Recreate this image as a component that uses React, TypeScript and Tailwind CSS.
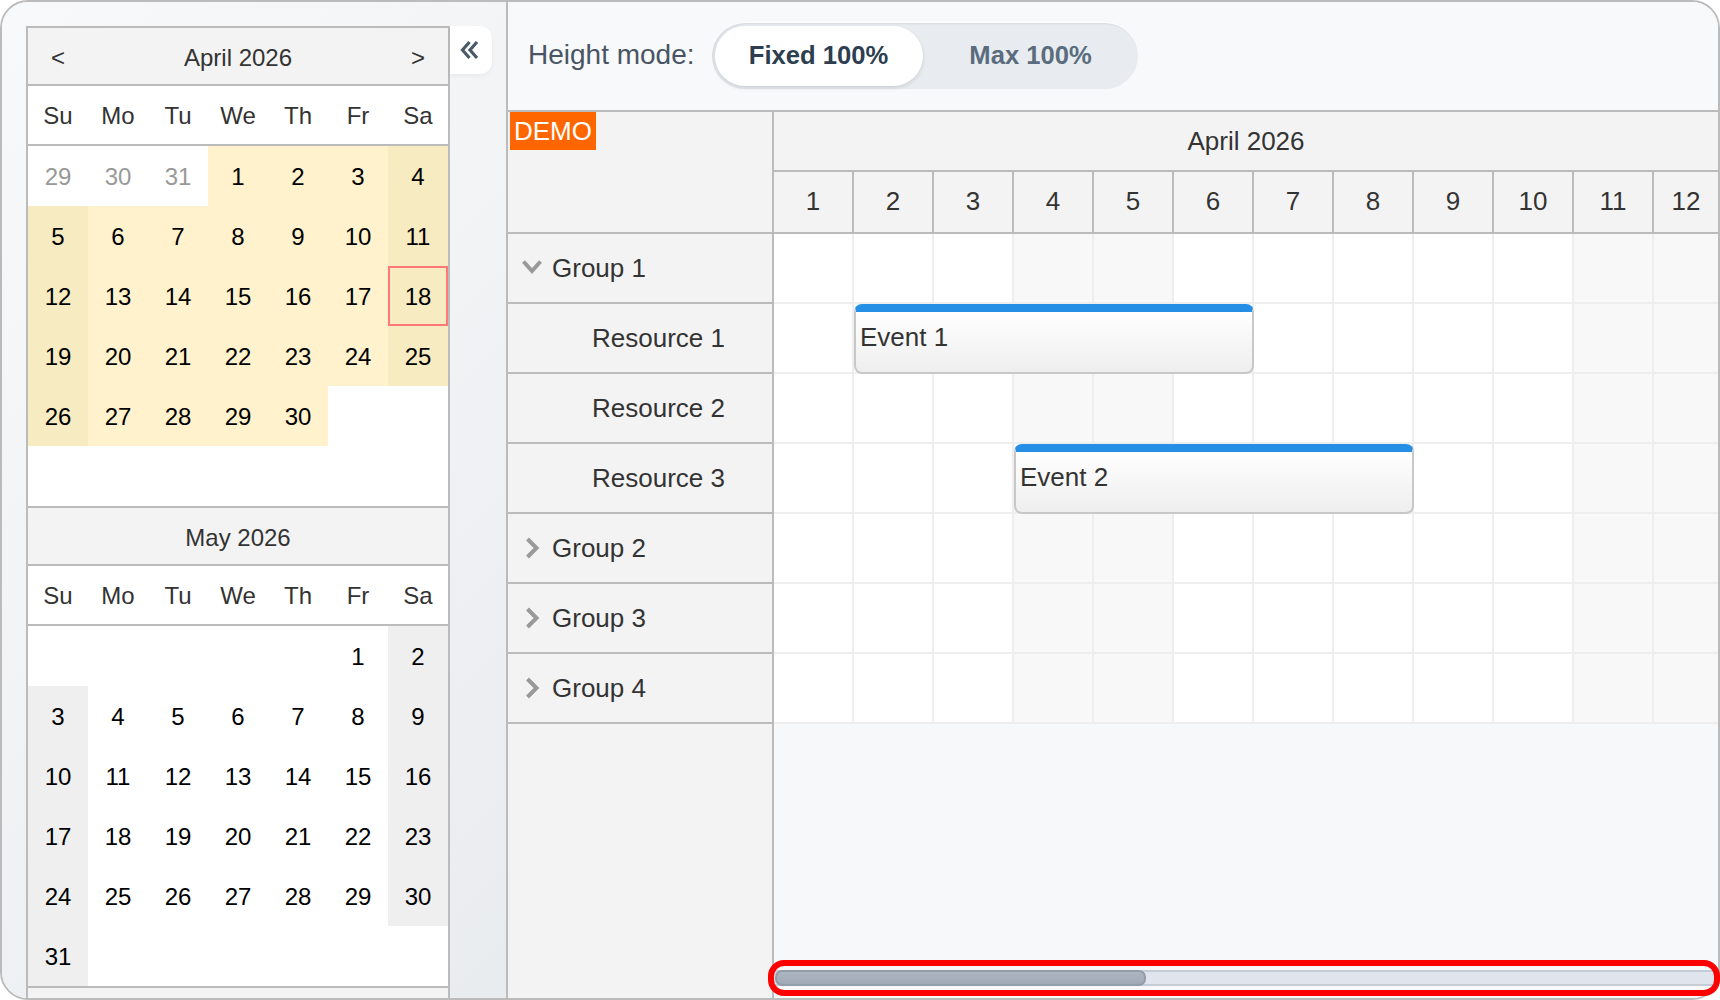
const WEEKDAYS = ['Su', 'Mo', 'Tu', 'We', 'Th', 'Fr', 'Sa'];
const DAYS = [1, 2, 3, 4, 5, 6, 7, 8, 9, 10, 11, 12];
const WEEKEND_DAYS = [4, 5, 11, 12];

const APRIL_CELLS = [
  '29', '30', '31', '1', '2', '3', '4',
  '5', '6', '7', '8', '9', '10', '11',
  '12', '13', '14', '15', '16', '17', '18',
  '19', '20', '21', '22', '23', '24', '25',
  '26', '27', '28', '29', '30', '', '',
  '', '', '', '', '', '', '',
];

const MAY_CELLS = [
  '', '', '', '', '', '1', '2',
  '3', '4', '5', '6', '7', '8', '9',
  '10', '11', '12', '13', '14', '15', '16',
  '17', '18', '19', '20', '21', '22', '23',
  '24', '25', '26', '27', '28', '29', '30',
  '31', '', '', '', '', '', '',
];

const ROWS = [
  { label: 'Group 1', group: true, open: true },
  { label: 'Resource 1', group: false, open: false },
  { label: 'Resource 2', group: false, open: false },
  { label: 'Resource 3', group: false, open: false },
  { label: 'Group 2', group: true, open: false },
  { label: 'Group 3', group: true, open: false },
  { label: 'Group 4', group: true, open: false },
];

function CalendarMonth({ title, cells, month }: { title: string; cells: string[]; month: 'april' | 'may' }) {
  return (
    <div>
      <div className="flex h-[58px] items-center justify-between border-b-2 border-[#bbb] bg-[#f3f3f3] pt-[4px] text-[24px] text-[#333]">
        <span className="flex w-[60px] justify-center">{month === 'april' ? '<' : ''}</span>
        <span>{title}</span>
        <span className="flex w-[60px] justify-center">{month === 'april' ? '>' : ''}</span>
      </div>
      <div className="grid h-[60px] grid-cols-7 items-center border-b-2 border-[#bbb] bg-white pt-[2px] text-center text-[24px] text-[#333]">
        {WEEKDAYS.map((d) => (
          <span key={d}>{d}</span>
        ))}
      </div>
      <div className="grid grid-cols-7 bg-white text-[24px]">
        {cells.map((text, i) => {
          const weekend = i % 7 === 0 || i % 7 === 6;
          const offMonth = month === 'april' && i < 3;
          const isToday = month === 'april' && text === '18';
          let bg = 'bg-white';
          if (text && !offMonth) {
            if (month === 'april') bg = weekend ? 'bg-[#f6ebc1]' : 'bg-[#fff2cc]';
            else if (weekend) bg = 'bg-[#efefef]';
          }
          return (
            <div
              key={i}
              className={`flex h-[60px] items-center justify-center pt-[1px] ${bg} ${offMonth ? 'text-[#999]' : 'text-black'} ${isToday ? 'border-2 border-[#f77]' : ''}`}
            >
              {text}
            </div>
          );
        })}
      </div>
    </div>
  );
}

function RowHeader({ label, group, open }: { label: string; group: boolean; open: boolean }) {
  return (
    <div className={`flex h-[70px] items-center border-b-2 border-[#bbb] text-[26px] text-[#333] ${group ? 'pl-[12px]' : 'pl-[84px]'}`}>
      {group && (
        <span className="mr-[8px] flex w-[24px] items-center justify-center">
          <svg width="24" height="24" viewBox="0 0 24 24" fill="none" stroke="#999" strokeWidth="4">
            <path d={open ? 'M3.5 5.5 L12 15 L20.5 5.5' : 'M7.5 3 L16.5 12 L7.5 21'} />
          </svg>
        </span>
      )}
      {label}
    </div>
  );
}

function EventBox({ text, className }: { text: string; className: string }) {
  return (
    <div className={`absolute flex h-[70px] w-[400px] items-start rounded-lg border-2 border-t-[8px] border-[#c8c8c8] border-t-[#248fe4] bg-gradient-to-b from-white to-[#eeeeee] pl-[4px] pt-[6px] text-[26px] text-[#333] ${className}`}>
      {text}
    </div>
  );
}

export default function App() {
  return (
    <div className="relative h-[1000px] w-[1720px] bg-white font-['Liberation_Sans',Arial,sans-serif]">
      <div className="flex h-full w-full overflow-hidden rounded-[28px] border-2 border-[#bbb]">
        {/* Navigator sidebar */}
        <div className="relative h-full w-[506px] shrink-0 overflow-hidden border-r-2 border-[#bbb] bg-[linear-gradient(135deg,#f8f9fa,#e9ecef)] pl-[24px] pt-[24px]">
          <div className="w-[424px] border-2 border-b-0 border-[#bbb]">
            <CalendarMonth title="April 2026" cells={APRIL_CELLS} month="april" />
            <div className="border-t-2 border-[#bbb]">
              <CalendarMonth title="May 2026" cells={MAY_CELLS} month="may" />
            </div>
            <div className="h-[60px] border-t-2 border-[#bbb] bg-[#f3f3f3]" />
          </div>
          <button className="absolute left-[448px] top-[24px] flex h-[48px] w-[42px] items-center justify-center rounded-r-xl bg-white pr-[3px] shadow-[0_2px_4px_rgba(0,0,0,0.05)]">
            <svg width="20" height="20" viewBox="0 0 20 20" fill="none" stroke="#4a5a6a" strokeWidth="3.2">
              <path d="M9.5 2 L2.5 10 L9.5 18" />
              <path d="M17 2 L10 10 L17 18" />
            </svg>
          </button>
        </div>

        {/* Scheduler */}
        <div className="flex min-w-0 flex-1 flex-col bg-[#f7f8fa]">
          <div className="flex h-[110px] shrink-0 items-center gap-[17px] border-b-2 border-[#bbb] bg-[#f8f9fb] pl-[20px]">
            <span className="pb-[2px] text-[28px] text-[#495563]">Height mode:</span>
            <div className="flex h-[66px] w-[426px] rounded-[33px] bg-[#e8ecf0] p-[3px] shadow-[inset_1px_1px_2px_rgba(0,0,0,0.08),0_-1px_1px_#fff]">
              <div className="flex w-[208px] items-center justify-center rounded-[30px] bg-white pb-[2px] text-[25.6px] font-bold text-[#2c3e50] shadow-[0_2px_4px_rgba(0,0,0,0.12)]">
                Fixed 100%
              </div>
              <div className="flex w-[212px] items-center justify-center pb-[2px] pl-[4px] text-[25.6px] font-bold text-[#5a6c7d]">
                Max 100%
              </div>
            </div>
          </div>

          <div className="flex min-h-0 flex-1">
            {/* Row headers */}
            <div className="w-[266px] shrink-0 border-r-2 border-[#bbb] bg-[#f3f3f3]">
              <div className="h-[122px] border-b-2 border-[#bbb]">
                <span className="ml-[2px] inline-block h-[38px] bg-[#ff6600] px-[4px] text-[26px] leading-[38px] text-white">DEMO</span>
              </div>
              {ROWS.map((row) => (
                <RowHeader key={row.label} {...row} />
              ))}
            </div>

            {/* Timeline */}
            <div className="flex min-w-0 flex-1 flex-col">
              <div className="bg-[#f3f3f3] text-[26px] text-[#333]">
                <div className="flex h-[60px] items-center justify-center border-b-2 border-[#bbb]">April 2026</div>
                <div className="grid h-[62px] grid-cols-[repeat(11,80px)_64px] border-b-2 border-[#bbb]">
                  {DAYS.map((d) => (
                    <div key={d} className={`flex items-center justify-center border-[#bbb] pb-[2px] ${d < 12 ? 'border-r-2' : ''}`}>
                      {d}
                    </div>
                  ))}
                </div>
              </div>

              <div className="relative">
                {ROWS.map((row) => (
                  <div key={row.label} className="grid h-[70px] grid-cols-[repeat(11,80px)_64px]">
                    {DAYS.map((d) => (
                      <div
                        key={d}
                        className={`border-b-2 border-[#eeeeee] ${d < 12 ? 'border-r-2' : ''} ${WEEKEND_DAYS.includes(d) ? 'bg-[#f8f8f8]' : 'bg-white'}`}
                      />
                    ))}
                  </div>
                ))}
                <EventBox text="Event 1" className="left-[80px] top-[70px]" />
                <EventBox text="Event 2" className="left-[240px] top-[210px]" />
              </div>

              {/* Horizontal scrollbar */}
              <div className="mb-[12px] mt-auto h-[16px] w-[940px] border-y-2 border-[#c5ccd6] bg-[#e0e4ec]">
                <div className="-my-[2px] ml-[1px] h-[16px] w-[371px] rounded-[7px] border-2 border-[#939daa] bg-gradient-to-b from-[#adb5c0] to-[#a0a9b5]" />
              </div>
            </div>
          </div>
        </div>
      </div>

      {/* Red highlight around the scrollbar */}
      <div className="absolute left-[768px] top-[960px] h-[36px] w-[952px] rounded-[16px] border-[6px] border-[#ff0000]" />
    </div>
  );
}
